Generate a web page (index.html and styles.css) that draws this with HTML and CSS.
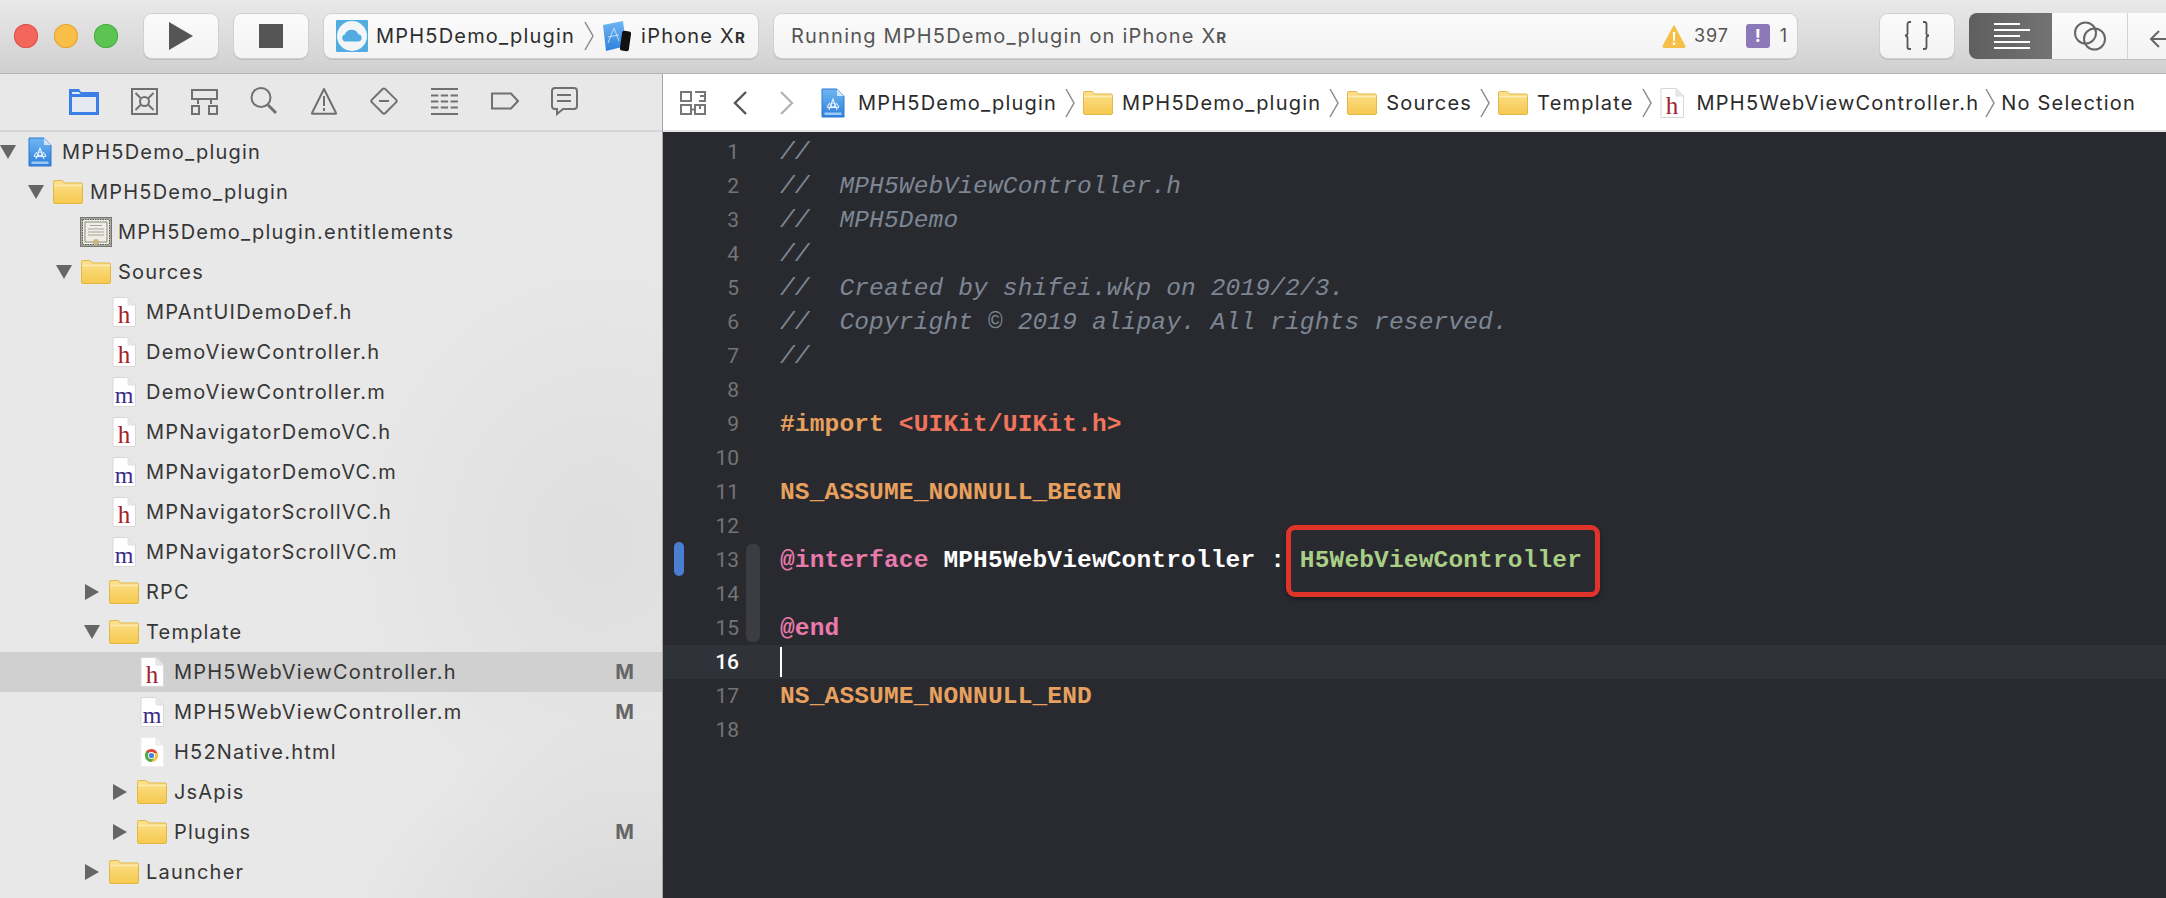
FILE: index.html
```html
<!DOCTYPE html>
<html lang="en">
<head>
<meta charset="utf-8">
<title>MPH5Demo_plugin</title>
<link rel="stylesheet" href="styles.css">
</head>
<body>
<svg class="sprite" aria-hidden="true">
  <defs>
    <linearGradient id="fg" x1="0" y1="0" x2="0" y2="1"><stop offset="0" stop-color="#fbe08c"/><stop offset="1" stop-color="#f6c94f"/></linearGradient>
    <linearGradient id="bp" x1="0" y1="0" x2="0" y2="1"><stop offset="0" stop-color="#6fb6f2"/><stop offset="1" stop-color="#2f80dc"/></linearGradient>
    <symbol id="folder" viewBox="0 0 30 24">
      <path d="M.5 3.5V2A1.5 1.5 0 0 1 2 .5h6.5c1 0 1.5.4 2 1.2l.8 1.3H28A1.5 1.5 0 0 1 29.500 4.500V22A1.500 1.500 0 0 1 28 23.500H2A1.500 1.500 0 0 1 .5 22z" fill="url(#fg)" stroke="#e2b748"/>
      <path d="M1 5.500h28" stroke="#fdeeb5" stroke-width="1.500"/>
    </symbol>
    <symbol id="hfile" viewBox="0 0 24 30">
      <path d="M1 .5h15l7.500 7.500v21.500H1z" fill="#fff" stroke="#d8d8d8"/>
      <path d="M16 .5V8h7.500z" fill="#e8e8e8" stroke="#e0e0e0"/>
      <text x="12" y="26" text-anchor="middle" class="glyph glyph-h">h</text>
    </symbol>
    <symbol id="mfile" viewBox="0 0 24 30">
      <path d="M1 .5h15l7.500 7.500v21.500H1z" fill="#fff" stroke="#d8d8d8"/>
      <path d="M16 .5V8h7.500z" fill="#e8e8e8" stroke="#e0e0e0"/>
      <text x="12" y="26" text-anchor="middle" class="glyph glyph-m">m</text>
    </symbol>
    <symbol id="htmlfile" viewBox="0 0 24 30">
      <path d="M1 .5h15l7.500 7.500v21.500H1z" fill="#fff" stroke="#eeeeee"/>
      <path d="M16 .5V8h7.500z" fill="#efefef" stroke="#e8e8e8"/>
      <path d="M5.700 21.800A6.600 6.600 0 0 1 8 12.800l3.500 5.700z" fill="#54a647"/>
      <path d="M11.500 25A6.500 6.500 0 0 0 17.500 16h-6z" fill="#f5c63c"/>
      <path d="M6 15a6.500 6.500 0 0 1 11.500 1h-6z" fill="#dd4b3e"/>
      <path d="M5.500 21a6.500 6.500 0 0 0 6 4l3-5-6-.5z" fill="#54a647"/>
      <circle cx="11.500" cy="18.500" r="3.500" fill="#fff"/>
      <circle cx="11.500" cy="18.500" r="2.600" fill="#4a80e8"/>
    </symbol>
    <symbol id="project" viewBox="0 0 24 30">
      <path d="M1 1h15l7 7v21H1z" fill="url(#bp)" stroke="#2f78cf"/>
      <path d="M16 1v7h7z" fill="#cfe6fb"/>
      <path d="M3.500 24.500h17v2.500h-17z" fill="#bfe0fb" opacity=".75"/>
      <g fill="none" stroke="#e6f3ff" stroke-width="1.100">
        <path d="M8 22l4-11 4 11M6 19.500h12M9 15l-3 4M15 15l3 4"/>
        <circle cx="12" cy="17" r="2"/>
      </g>
    </symbol>
    <symbol id="cert" viewBox="0 0 32 30">
      <rect x=".5" y=".5" width="31" height="29" fill="#a9a8a2" stroke="#777771"/>
      <rect x="2.500" y="2.500" width="27" height="25" fill="#f1efe7" stroke="#55554f" stroke-dasharray="1.500 1"/>
      <rect x="5" y="5" width="22" height="20" fill="#efeee6" stroke="#8a8a82"/>
      <path d="M10 8.500h12M8 12h16M8 15h16M8 18h16" stroke="#a5a49b"/>
      <circle cx="16" cy="25" r="3" fill="#c9b780"/>
    </symbol>
  </defs>
</svg>

<div class="window">
  <header class="toolbar">
    <div class="lights">
      <span class="light light-red"></span>
      <span class="light light-yellow"></span>
      <span class="light light-green"></span>
    </div>
    <button class="tb-btn tb-square" type="button" aria-label="Run">
      <svg width="24" height="28" viewBox="0 0 24 28"><path d="M0 0l24 14L0 28z" fill="#555"/></svg>
    </button>
    <button class="tb-btn tb-square" type="button" aria-label="Stop">
      <span class="stop-square"></span>
    </button>
    <div class="tb-btn scheme">
      <svg class="scheme-icon" width="32" height="32" viewBox="0 0 32 32">
        <rect width="32" height="32" rx="1" fill="#52ace2"/>
        <circle cx="16" cy="16" r="15" fill="#f2f6f8"/>
        <path d="M9.500 21.500a3.500 3.500 0 0 1-.6-6.900 7.200 7.200 0 0 1 13.400-.4 3.700 3.700 0 0 1 .4 7.300z" fill="#52ace2"/>
      </svg>
      <span class="scheme-name">MPH5Demo_plugin</span>
      <svg class="chev chev-tb" width="10" height="30" viewBox="0 0 10 30"><path d="M1 1l8 14-8 14" fill="none" stroke="#8a8a8a" stroke-width="1.500"/></svg>
      <svg class="device-icon" width="30" height="32" viewBox="0 0 30 32">
        <path d="M1 5l20-4 3 25-20 5z" fill="url(#bp)"/>
        <path d="M6 23l6-15 5 13M6 17l11-2" fill="none" stroke="#bfe0fb"/>
        <rect x="19" y="11" width="9" height="20" rx="2" fill="#111" transform="rotate(8 23 21)"/>
      </svg>
      <span class="device-name">iPhone X<small class="sc">R</small></span>
    </div>
    <div class="tb-btn status">
      <span class="status-text">Running MPH5Demo_plugin on iPhone X<small class="sc">R</small></span>
      <svg class="warn" width="24" height="24" viewBox="0 0 24 24">
        <path d="M12 1.500L23 22a1 1 0 0 1-1 1.500H2A1 1 0 0 1 1 22z" fill="#f7bf47" stroke="#f7bf47" stroke-linejoin="round"/>
        <path d="M10.800 8h2.400l-.4 9h-1.600zM10.800 18.500h2.400v2.500h-2.400z" fill="#fff"/>
      </svg>
      <span class="count">397</span>
      <span class="issue">!</span>
      <span class="count count-last">1</span>
    </div>
    <button class="tb-btn code-btn" type="button" aria-label="Code snippets">
      <svg width="26" height="30" viewBox="0 0 26 30"><path d="M7 1H5.500A2 2 0 0 0 3.500 3v8a2.500 2.500 0 0 1-2.500 3.500A2.500 2.500 0 0 1 3.500 17v9a2 2 0 0 0 2 2H7M19 1h1.500a2 2 0 0 1 2 2v8a2.500 2.500 0 0 0 2.500 3.500A2.500 2.500 0 0 0 22.500 17v9a2 2 0 0 1-2 2H19" fill="none" stroke="#555" stroke-width="1.800"/></svg>
    </button>
    <div class="segments">
      <span class="seg seg-on">
        <svg width="36" height="26" viewBox="0 0 36 26"><path d="M0 1h26M0 7h36M0 13h26M0 19h36M0 25h36" stroke="#fff" stroke-width="2"/></svg>
      </span>
      <span class="seg seg-mid">
        <svg width="34" height="30" viewBox="0 0 34 30"><circle cx="12.500" cy="12" r="10.500" fill="none" stroke="#666" stroke-width="2"/><circle cx="21.500" cy="18" r="10.500" fill="none" stroke="#666" stroke-width="2"/></svg>
      </span>
      <span class="seg seg-end">
        <svg width="26" height="22" viewBox="0 0 26 22"><path d="M26 11H2M10 3l-8 8 8 8" fill="none" stroke="#666" stroke-width="2"/></svg>
      </span>
    </div>
  </header>

  <main class="workspace">
    <aside class="sidebar">
      <nav class="side-tabs">
        <svg class="tab-icon" viewBox="0 0 30 30"><path d="M0 3h10l2 3h18v23H0z" fill="#3a7fe6"/><path d="M3 11h24v15H3z" fill="#e4e9f2"/><path d="M3 6h7l1.500 2H3z" fill="#e4e9f2"/></svg>
        <svg class="tab-icon" viewBox="0 0 30 30"><g fill="none" stroke="#707070" stroke-width="2"><rect x="3" y="3" width="25" height="25"/><circle cx="15.500" cy="15.500" r="4.500"/><path d="M6.500 7l5 5M24.500 7l-5 5M6.500 24l5-5M24.500 24l-5-5"/></g></svg>
        <svg class="tab-icon" viewBox="0 0 30 30"><g fill="none" stroke="#707070" stroke-width="2"><path d="M3 4h25v9H3zM9 13v5M22 13v5"/><path d="M3 20h7v8H3zM20 20h8v8h-8z"/></g></svg>
        <svg class="tab-icon" viewBox="0 0 30 30"><g fill="none" stroke="#707070"><circle cx="12" cy="11.500" r="9.500" stroke-width="2"/><path d="M19 19l8 8" stroke-width="3"/></g></svg>
        <svg class="tab-icon" viewBox="0 0 30 30"><path d="M15 3L27 27a.5.5 0 0 1-.5.800h-23a.5.5 0 0 1-.5-.800z" fill="none" stroke="#707070" stroke-width="2" stroke-linejoin="round"/><path d="M15 10v10M15 22v3" stroke="#707070" stroke-width="2"/></svg>
        <svg class="tab-icon" viewBox="0 0 30 30"><path d="M15 2.500a2 2 0 0 1 1.400.6L27 13.600a2 2 0 0 1 0 2.800L16.400 27a2 2 0 0 1-2.800 0L3 16.400a2 2 0 0 1 0-2.800L13.600 3a2 2 0 0 1 1.400-.5z" fill="none" stroke="#707070" stroke-width="2"/><path d="M10 15h10" stroke="#707070" stroke-width="2"/></svg>
        <svg class="tab-icon" viewBox="0 0 30 30"><g stroke="#707070" stroke-width="2"><path d="M2 3h27M2 28h27"/><path d="M2 9.500h27M2 15.500h27M2 21.500h27" stroke-dasharray="7.300 2.500"/></g></svg>
        <svg class="tab-icon" viewBox="0 0 30 30"><path d="M3 7.500h19l7 7.500-7 7.500H3z" fill="none" stroke="#707070" stroke-width="2"/></svg>
        <svg class="tab-icon" viewBox="0 0 30 30"><path d="M6 2h19a3 3 0 0 1 3 3v15a3 3 0 0 1-3 3H14l-6 5v-5H6a3 3 0 0 1-3-3V5a3 3 0 0 1 3-3z" fill="none" stroke="#707070" stroke-width="2"/><path d="M8 9h14M8 15h14" stroke="#707070" stroke-width="2"/></svg>
      </nav>
      <ul class="tree">
        <li class="row lvl-0"><span class="tri tri-open"></span><span class="ico"><svg width="24" height="30"><use href="#project"/></svg></span><span class="name">MPH5Demo_plugin</span></li>
        <li class="row lvl-1"><span class="tri tri-open"></span><span class="ico"><svg width="30" height="24"><use href="#folder"/></svg></span><span class="name">MPH5Demo_plugin</span></li>
        <li class="row lvl-2"><span class="tri"></span><span class="ico"><svg width="32" height="30"><use href="#cert"/></svg></span><span class="name">MPH5Demo_plugin.entitlements</span></li>
        <li class="row lvl-2"><span class="tri tri-open"></span><span class="ico"><svg width="30" height="24"><use href="#folder"/></svg></span><span class="name">Sources</span></li>
        <li class="row lvl-3"><span class="tri"></span><span class="ico"><svg width="24" height="30"><use href="#hfile"/></svg></span><span class="name">MPAntUIDemoDef.h</span></li>
        <li class="row lvl-3"><span class="tri"></span><span class="ico"><svg width="24" height="30"><use href="#hfile"/></svg></span><span class="name">DemoViewController.h</span></li>
        <li class="row lvl-3"><span class="tri"></span><span class="ico"><svg width="24" height="30"><use href="#mfile"/></svg></span><span class="name">DemoViewController.m</span></li>
        <li class="row lvl-3"><span class="tri"></span><span class="ico"><svg width="24" height="30"><use href="#hfile"/></svg></span><span class="name">MPNavigatorDemoVC.h</span></li>
        <li class="row lvl-3"><span class="tri"></span><span class="ico"><svg width="24" height="30"><use href="#mfile"/></svg></span><span class="name">MPNavigatorDemoVC.m</span></li>
        <li class="row lvl-3"><span class="tri"></span><span class="ico"><svg width="24" height="30"><use href="#hfile"/></svg></span><span class="name">MPNavigatorScrollVC.h</span></li>
        <li class="row lvl-3"><span class="tri"></span><span class="ico"><svg width="24" height="30"><use href="#mfile"/></svg></span><span class="name">MPNavigatorScrollVC.m</span></li>
        <li class="row lvl-3"><span class="tri tri-closed"></span><span class="ico"><svg width="30" height="24"><use href="#folder"/></svg></span><span class="name">RPC</span></li>
        <li class="row lvl-3"><span class="tri tri-open"></span><span class="ico"><svg width="30" height="24"><use href="#folder"/></svg></span><span class="name">Template</span></li>
        <li class="row lvl-4 row-selected"><span class="tri"></span><span class="ico"><svg width="24" height="30"><use href="#hfile"/></svg></span><span class="name">MPH5WebViewController.h</span><span class="scm">M</span></li>
        <li class="row lvl-4"><span class="tri"></span><span class="ico"><svg width="24" height="30"><use href="#mfile"/></svg></span><span class="name">MPH5WebViewController.m</span><span class="scm">M</span></li>
        <li class="row lvl-4"><span class="tri"></span><span class="ico"><svg width="24" height="30"><use href="#htmlfile"/></svg></span><span class="name">H52Native.html</span></li>
        <li class="row lvl-4"><span class="tri tri-closed"></span><span class="ico"><svg width="30" height="24"><use href="#folder"/></svg></span><span class="name">JsApis</span></li>
        <li class="row lvl-4"><span class="tri tri-closed"></span><span class="ico"><svg width="30" height="24"><use href="#folder"/></svg></span><span class="name">Plugins</span><span class="scm">M</span></li>
        <li class="row lvl-3"><span class="tri tri-closed"></span><span class="ico"><svg width="30" height="24"><use href="#folder"/></svg></span><span class="name">Launcher</span></li>
      </ul>
    </aside>

    <section class="editor">
      <nav class="jumpbar">
        <svg class="related" width="26" height="24" viewBox="0 0 26 24"><g fill="none" stroke="#777" stroke-width="2"><path d="M1 1h10v9H1zM15 1h10v9h-6M25 10V5h-5M1 14h10v9H1zM15 14h10v9H15zM11 18.500h5M20 14v4"/></g></svg>
        <svg class="nav-back" width="14" height="24" viewBox="0 0 14 24"><path d="M13 1L2 12l11 11" fill="none" stroke="#555" stroke-width="2.400"/></svg>
        <svg class="nav-forward" width="14" height="24" viewBox="0 0 14 24"><path d="M1 1l11 11L1 23" fill="none" stroke="#b5b5b5" stroke-width="2.400"/></svg>
        <ol class="crumbs">
          <li class="crumb crumb-doc"><svg width="24" height="30"><use href="#project"/></svg><span>MPH5Demo_plugin</span></li>
          <li class="sep"><svg width="10" height="30" viewBox="0 0 10 30"><path d="M1 1l8 14-8 14" fill="none" stroke="#8a8a8a" stroke-width="1.500"/></svg></li>
          <li class="crumb"><svg width="30" height="24"><use href="#folder"/></svg><span>MPH5Demo_plugin</span></li>
          <li class="sep"><svg width="10" height="30" viewBox="0 0 10 30"><path d="M1 1l8 14-8 14" fill="none" stroke="#8a8a8a" stroke-width="1.500"/></svg></li>
          <li class="crumb"><svg width="30" height="24"><use href="#folder"/></svg><span>Sources</span></li>
          <li class="sep"><svg width="10" height="30" viewBox="0 0 10 30"><path d="M1 1l8 14-8 14" fill="none" stroke="#8a8a8a" stroke-width="1.500"/></svg></li>
          <li class="crumb"><svg width="30" height="24"><use href="#folder"/></svg><span>Template</span></li>
          <li class="sep"><svg width="10" height="30" viewBox="0 0 10 30"><path d="M1 1l8 14-8 14" fill="none" stroke="#8a8a8a" stroke-width="1.500"/></svg></li>
          <li class="crumb crumb-doc"><svg width="24" height="30"><use href="#hfile"/></svg><span>MPH5WebViewController.h</span></li>
          <li class="sep sep-tight"><svg width="10" height="30" viewBox="0 0 10 30"><path d="M1 1l8 14-8 14" fill="none" stroke="#8a8a8a" stroke-width="1.500"/></svg></li>
          <li class="crumb"><span>No Selection</span></li>
        </ol>
      </nav>
      <div class="code">
        <div class="line"><span class="ln">1</span><span class="src c">//</span></div>
        <div class="line"><span class="ln">2</span><span class="src c">//  MPH5WebViewController.h</span></div>
        <div class="line"><span class="ln">3</span><span class="src c">//  MPH5Demo</span></div>
        <div class="line"><span class="ln">4</span><span class="src c">//</span></div>
        <div class="line"><span class="ln">5</span><span class="src c">//  Created by shifei.wkp on 2019/2/3.</span></div>
        <div class="line"><span class="ln">6</span><span class="src c">//  Copyright © 2019 alipay. All rights reserved.</span></div>
        <div class="line"><span class="ln">7</span><span class="src c">//</span></div>
        <div class="line"><span class="ln">8</span><span class="src"></span></div>
        <div class="line"><span class="ln">9</span><span class="src"><span class="pp">#import</span> <span class="str">&lt;UIKit/UIKit.h&gt;</span></span></div>
        <div class="line"><span class="ln">10</span><span class="src"></span></div>
        <div class="line"><span class="ln">11</span><span class="src pp">NS_ASSUME_NONNULL_BEGIN</span></div>
        <div class="line"><span class="ln">12</span><span class="src"></span></div>
        <div class="line"><span class="ln">13</span><span class="src"><span class="kw">@interface</span> <span class="ident">MPH5WebViewController : </span><span class="type">H5WebViewController</span></span></div>
        <div class="line"><span class="ln">14</span><span class="src"></span></div>
        <div class="line"><span class="ln">15</span><span class="src kw">@end</span></div>
        <div class="line line-current"><span class="ln">16</span><span class="src"><span class="caret"></span></span></div>
        <div class="line"><span class="ln">17</span><span class="src pp">NS_ASSUME_NONNULL_END</span></div>
        <div class="line"><span class="ln">18</span><span class="src"></span></div>
        <span class="change-bar"></span>
        <span class="fold-ribbon"></span>
        <span class="callout"></span>
      </div>
    </section>
  </main>
</div>
</body>
</html>
```
FILE: styles.css
```css
* { box-sizing: border-box; }
html, body { margin: 0; padding: 0; }
body {
  width: 2166px;
  height: 898px;
  overflow: hidden;
  background: #292a30;
  font-family: "Inter", "Liberation Sans", sans-serif;
  font-size: 20px;
  color: #333;
  letter-spacing: 1.2px;
}
.sprite { position: absolute; width: 0; height: 0; }
.glyph { font-family: "Liberation Serif", serif; letter-spacing: 0; }
.glyph-h { font-size: 25px; fill: #a3212e; }
.glyph-m { font-size: 24px; fill: #3a2a86; }

.window { display: flex; flex-direction: column; height: 898px; }

/* Toolbar */
.toolbar {
  flex: 0 0 74px;
  display: flex;
  align-items: center;
  padding: 0 0 2px 14px;
  background: linear-gradient(#e9e9e9, #d0d0d0);
  border-bottom: 1px solid #b4b4b4;
}
.toolbar > * { flex: none; }
.lights { display: flex; gap: 16px; margin-right: 26px; }
.light { width: 24px; height: 24px; border-radius: 50%; }
.light-red { background: #f2665c; box-shadow: inset 0 0 0 1px #dd5148; }
.light-yellow { background: #f9be47; box-shadow: inset 0 0 0 1px #e0a535; }
.light-green { background: #5cc453; box-shadow: inset 0 0 0 1px #4aab42; }
.tb-btn {
  height: 44px;
  display: flex;
  align-items: center;
  justify-content: center;
  padding: 0;
  font: inherit;
  letter-spacing: inherit;
  color: #2e2e2e;
  background: linear-gradient(#fbfbfb, #f3f3f3);
  border: 0;
  border-radius: 8px;
  box-shadow: 0 0 0 1px #d0d0d0, 0 1px 0 1px #bdbdbd;
}
.tb-square { width: 74px; margin-right: 16px; }
.stop-square { width: 24px; height: 24px; background: #555; }
.scheme { width: 434px; margin-right: 16px; justify-content: flex-start; padding-left: 12px; }
.scheme-icon { margin-right: 8px; }
.chev-tb { margin: 0 8px 0 9px; }
.device-icon { margin-right: 9px; }
.sc { font-size: 15px; font-weight: 700; letter-spacing: 0; }
.status {
  width: 1023px;
  justify-content: flex-start;
  padding-left: 17px;
  color: #555;
}
.status-text { flex: 1; }
.warn { margin-right: 8px; }
.count { font-size: 18px; color: #555; letter-spacing: .9px; }
.issue {
  width: 24px;
  height: 24px;
  margin: 0 10px 0 17px;
  border-radius: 3px;
  background: #8d79b8;
  color: #fff;
  font-weight: 700;
  font-size: 18px;
  line-height: 24px;
  text-align: center;
  letter-spacing: 0;
}
.count-last { margin-right: 9px; }
.code-btn { width: 74px; margin-left: 83px; margin-right: 15px; }
.toolbar > .segments { display: flex; flex: 1; min-width: 0; height: 46px; }
.seg { display: flex; align-items: center; height: 46px; flex: none; }
.seg-on {
  width: 83px;
  padding-left: 25px;
  border-radius: 8px 0 0 8px;
  background: linear-gradient(90deg, #5f5f5f, #737373);
}
.seg-mid {
  width: 76px;
  justify-content: center;
  background: linear-gradient(#fbfbfb, #f3f3f3);
  border-right: 1px solid #d2d2d2;
  box-shadow: 0 1px 0 #bdbdbd;
}
.seg-end {
  flex: 1;
  min-width: 0;
  padding-left: 21px;
  padding-top: 6px;
  background: linear-gradient(#fbfbfb, #f3f3f3);
  box-shadow: 0 1px 0 #bdbdbd;
  overflow: hidden;
}
.seg-end svg { flex: none; }

/* Workspace */
.workspace { flex: 1; display: flex; min-height: 0; }
.sidebar {
  flex: 0 0 663px;
  display: flex;
  flex-direction: column;
  background:
    radial-gradient(ellipse 300px 240px at 640px 880px, #d5d5d5, rgba(213,213,213,0) 100%),
    radial-gradient(ellipse 260px 300px at 600px 470px, #dedede, rgba(222,222,222,0) 100%),
    #e8e8e8;
  border-right: 1px solid #a8a8a8;
}
.side-tabs {
  flex: 0 0 58px;
  display: flex;
  align-items: center;
  gap: 30px;
  padding: 0 0 2px 69px;
  border-bottom: 2px solid #d5d5d5;
}
.tab-icon { width: 30px; height: 30px; flex: none; }
.tree { list-style: none; margin: 0; padding: 0; }
.row { height: 40px; display: flex; align-items: center; padding-right: 28px; }
.lvl-0 { padding-left: 0; }
.lvl-1 { padding-left: 28px; }
.lvl-2 { padding-left: 56px; }
.lvl-3 { padding-left: 84px; }
.lvl-4 { padding-left: 112px; }
.row-selected { background: #d0d0d0; }
.tri { flex: 0 0 24px; width: 24px; height: 20px; position: relative; }
.tri-open::before {
  content: "";
  position: absolute;
  left: 0;
  top: 3px;
  border-style: solid;
  border-width: 14px 8.500px 0;
  border-color: #666 transparent transparent;
}
.tri-closed::before {
  content: "";
  position: absolute;
  left: 1px;
  top: 2px;
  border-style: solid;
  border-width: 8px 0 8px 14px;
  border-color: transparent transparent transparent #666;
}
.ico { flex: 0 0 32px; display: flex; align-items: center; justify-content: center; margin-right: 6px; }
.name { color: #363636; white-space: nowrap; }
.scm { margin-left: auto; font-weight: 700; color: #666; font-size: 20px; letter-spacing: 0; }

/* Editor */
.editor { flex: 1; min-width: 0; display: flex; flex-direction: column; }
.jumpbar {
  flex: 0 0 58px;
  display: flex;
  align-items: center;
  padding: 2px 0 0 17px;
  background: #fff;
  border-bottom: 2px solid #e4e4e4;
}
.related { margin-right: 27px; }
.nav-back { margin-right: 33px; }
.nav-forward { margin-right: 27px; }
.crumbs { list-style: none; display: flex; align-items: center; margin: 0; padding: 0; color: #2b2b2b; }
.crumb { display: flex; align-items: center; gap: 9px; white-space: nowrap; }
.crumb-doc { gap: 13px; }
.sep { width: 26px; display: flex; justify-content: center; }
.sep-tight { width: 22px; }

.code {
  position: relative;
  flex: 1;
  padding-top: 3px;
  background: #292a30;
  font-family: "Liberation Mono", monospace;
  font-size: 24.500px;
  letter-spacing: .15px;
  color: #fff;
}
.line { height: 34px; display: flex; align-items: center; white-space: pre; }
.line-current { background: #2f3239; }
.ln {
  flex: 0 0 76px;
  text-align: right;
  font-family: "Roboto", sans-serif;
  font-size: 21px;
  letter-spacing: 0;
  color: #747478;
}
.line-current .ln { color: #fff; font-weight: 500; }
.src { margin-left: 41px; }
.c { color: #7d8693; font-style: italic; }
.pp { color: #e8a05e; font-weight: 700; }
.str { color: #f0735c; font-weight: 700; }
.kw { color: #e87aac; font-weight: 700; }
.ident { color: #fff; font-weight: 700; }
.type { color: #a8cf85; font-weight: 700; }
.caret { display: block; width: 2px; height: 30px; background: #fff; }
.change-bar {
  position: absolute;
  left: 11px;
  top: 410px;
  width: 10px;
  height: 34px;
  border-radius: 5px;
  background: #4a7ed2;
}
.fold-ribbon {
  position: absolute;
  left: 83px;
  top: 412px;
  width: 14px;
  height: 98px;
  border-radius: 6px;
  background: #3c3d43;
}
.callout {
  position: absolute;
  left: 623px;
  top: 393px;
  width: 314px;
  height: 72px;
  border: 5px solid #e0332a;
  border-radius: 9px;
  box-shadow: 0 2px 4px rgba(0,0,0,.4);
}
```
